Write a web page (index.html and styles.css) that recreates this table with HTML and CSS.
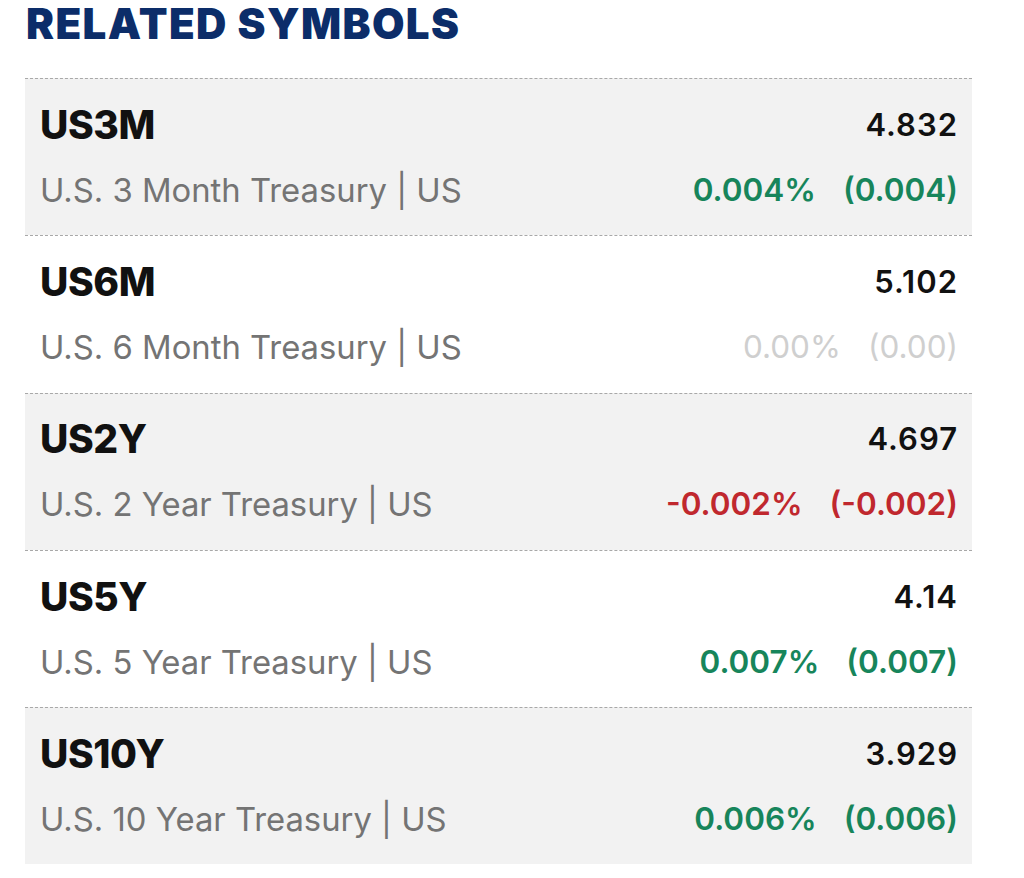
FILE: index.html
```html
<!DOCTYPE html>
<html>
<head>
<meta charset="utf-8">
<link rel="stylesheet" href="styles.css">
</head>
<body>
<section class="related">
  <h2 class="title">RELATED SYMBOLS</h2>
  <div class="list">
    <div class="row shaded">
      <div class="sym">US3M</div>
      <div class="price">4.832</div>
      <div class="name">U.S. 3 Month Treasury | US</div>
      <div class="change up"><span>0.004%</span><span>(0.004)</span></div>
    </div>
    <div class="row">
      <div class="sym">US6M</div>
      <div class="price">5.102</div>
      <div class="name">U.S. 6 Month Treasury | US</div>
      <div class="change flat"><span>0.00%</span><span>(0.00)</span></div>
    </div>
    <div class="row shaded">
      <div class="sym">US2Y</div>
      <div class="price">4.697</div>
      <div class="name">U.S. 2 Year Treasury | US</div>
      <div class="change down"><span>-0.002%</span><span>(-0.002)</span></div>
    </div>
    <div class="row">
      <div class="sym">US5Y</div>
      <div class="price">4.14</div>
      <div class="name">U.S. 5 Year Treasury | US</div>
      <div class="change up"><span>0.007%</span><span>(0.007)</span></div>
    </div>
    <div class="row shaded">
      <div class="sym">US10Y</div>
      <div class="price">3.929</div>
      <div class="name">U.S. 10 Year Treasury | US</div>
      <div class="change up"><span>0.006%</span><span>(0.006)</span></div>
    </div>
  </div>
</section>
</body>
</html>
```
FILE: styles.css
```css
* { box-sizing: border-box; }
html, body { margin: 0; padding: 0; background: #fff; }
body { font-family: "Inter", "Lato", "Liberation Sans", sans-serif; }
.related { padding: 0 52px 0 25px; }
.title {
  margin: 0;
  padding: 0 0 0 1px;
  height: 78px;
  font-size: 42px;
  line-height: 48px;
  font-weight: 900;
  color: #0c2d69;
  letter-spacing: 1.4px;
}
.list { display: flex; flex-direction: column; }
.row {
  height: 157.3px;
  border-top: 1px dashed #a8a8a8;
  display: grid;
  grid-template-columns: 1fr auto;
  grid-template-rows: 40px 40px;
  row-gap: 25px;
  align-content: center;
  padding: 0 14px 0 15px;
  background: #fff;
}
.row.shaded { background: #f2f2f2; }
.sym {
  font-size: 39px;
  line-height: 40px;
  font-weight: 800;
  color: #111;
  letter-spacing: -0.4px;
}
.price {
  font-size: 31px;
  line-height: 40px;
  font-weight: 600;
  color: #111;
  text-align: right;
  letter-spacing: 1px;
}
.name {
  font-size: 32.8px;
  line-height: 40px;
  font-weight: 400;
  color: #747474;
}
.change {
  display: flex;
  gap: 27px;
  justify-content: flex-end;
  font-size: 31.5px;
  line-height: 40px;
  font-weight: 600;
}
.change.up { color: #17855b; }
.change.down { color: #c0282e; }
.change.flat { color: #cfcfcf; font-weight: 400; }
```
